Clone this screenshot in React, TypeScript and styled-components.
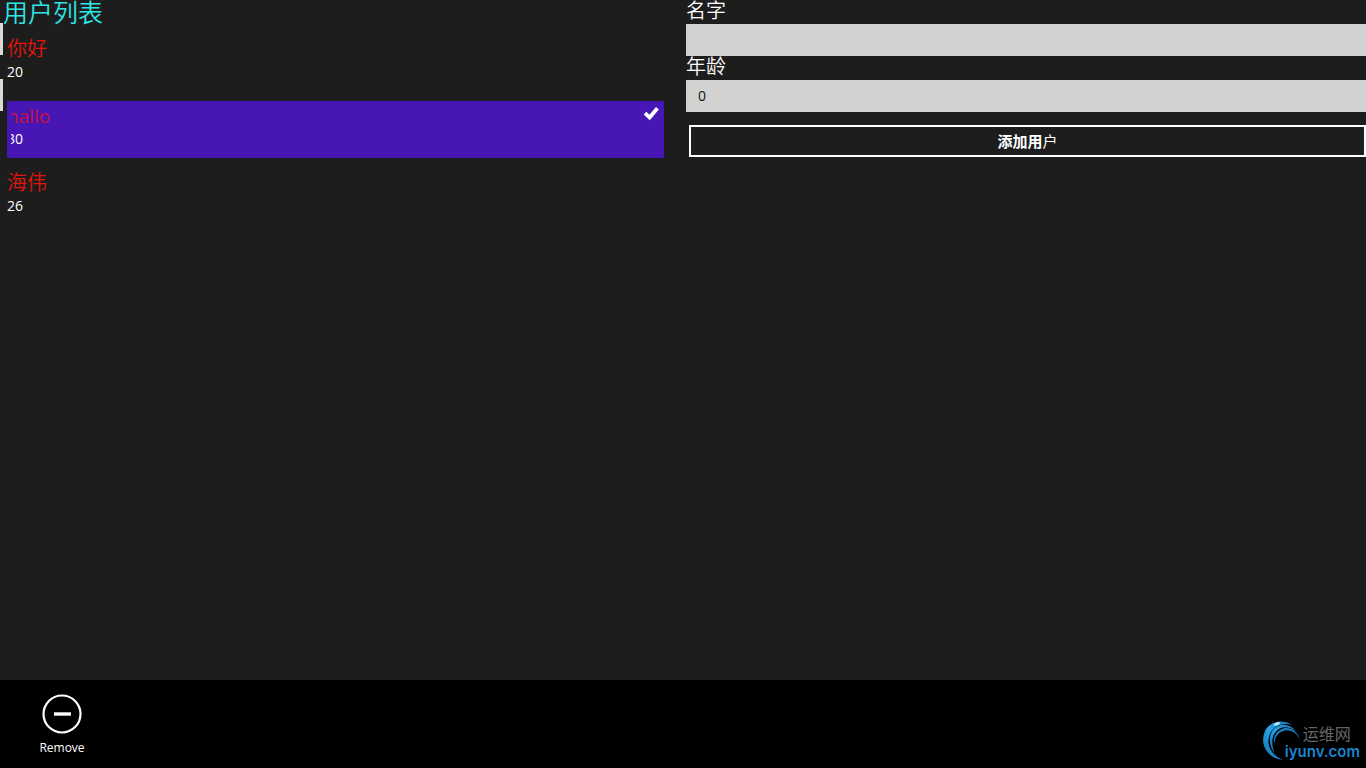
import React, { useState } from 'react';
import styled, { createGlobalStyle, css } from 'styled-components';

const GlobalStyle = createGlobalStyle`
  * { box-sizing: border-box; }
  body {
    margin: 0;
    background: #1d1d1d;
    color: #fff;
    font-family: "Open Sans", "Noto Sans CJK SC", sans-serif;
    font-size: 15px;
  }
`;

const Page = styled.div`
  display: flex;
  flex-direction: column;
  min-height: 100vh;
`;

const Columns = styled.main`
  flex: 1;
  display: grid;
  grid-template-columns: 1fr 1fr;
`;

const ListPane = styled.section`
  position: relative;
  padding: 0 19px 0 3px;
`;

const Title = styled.h1`
  margin: 0;
  color: #2ee6e6;
  font-size: 25px;
  font-weight: 350;
  line-height: 24px;
`;

const EdgeTab = styled.span<{ $top: number }>`
  position: absolute;
  left: 0;
  top: ${({ $top }) => $top}px;
  width: 3px;
  height: 32px;
  background: #d8dad5;
`;

const UserList = styled.ul`
  display: flex;
  flex-direction: column;
  gap: 10px;
  margin: 0;
  padding: 10px 0 0 4px;
  list-style: none;
`;

const UserItem = styled.button<{ $selected: boolean }>`
  display: flex;
  justify-content: space-between;
  align-items: flex-start;
  width: 100%;
  min-height: 57px;
  padding: 3px 4px 0 0;
  border: 0;
  background: ${({ $selected }) => ($selected ? '#4617b4' : 'transparent')};
  color: #fff;
  font: inherit;
  text-align: left;
`;

const UserText = styled.span<{ $clipped: boolean }>`
  display: flex;
  flex-direction: column;
  ${({ $clipped }) => $clipped && css`clip-path: inset(0 0 0 4px);`}
`;

const UserName = styled.span<{ $selected: boolean }>`
  color: ${({ $selected }) => ($selected ? '#c8103c' : '#e0150c')};
  font-size: ${({ $selected }) => ($selected ? 19 : 20)}px;
  font-weight: ${({ $selected }) => ($selected ? 400 : 350)};
  line-height: 24px;
`;

const UserAge = styled.span`
  font-size: 14px;
  line-height: 22px;
`;

const FormPane = styled.form`
  display: flex;
  flex-direction: column;
  padding-left: 3px;
`;

const Label = styled.label`
  font-size: 20px;
  font-weight: 350;
  line-height: 22px;
  height: 24px;
`;

const Field = styled.input`
  width: 100%;
  height: 32px;
  padding: 0 12px 2px;
  border: 0;
  border-radius: 0;
  background: #d2d2d2;
  color: #111;
  font: inherit;
  font-size: 14px;
`;

const AddButton = styled.button`
  height: 32px;
  margin: 13px 0 0 3px;
  padding: 0 0 2px;
  border: 2px solid #fff;
  background: transparent;
  color: #fff;
  font: inherit;
`;

const AppBar = styled.footer`
  display: flex;
  justify-content: space-between;
  align-items: flex-start;
  height: 88px;
  padding: 14px 6px 0 32px;
  background: #000;
`;

const Command = styled.button`
  display: flex;
  flex-direction: column;
  align-items: center;
  gap: 5px;
  width: 60px;
  padding: 0;
  border: 0;
  background: transparent;
  color: #fff;
  font: inherit;
  font-size: 12px;
  line-height: 18px;
`;

const Brand = styled.a`
  display: flex;
  align-items: flex-start;
  padding-top: 26px;
  text-decoration: none;
`;

const BrandText = styled.span`
  display: flex;
  flex-direction: column;
  margin-left: -15px;
  padding-top: 5px;
`;

const BrandName = styled.span`
  padding-left: 18px;
  color: #66666a;
  font-size: 16px;
  line-height: 18px;
`;

const BrandDomain = styled.span`
  color: #1a86d0;
  font-family: Inter, sans-serif;
  font-size: 15px;
  font-weight: 600;
  line-height: 18px;
`;

const users = [
  { name: '你好', age: 20 },
  { name: 'hallo', age: 30 },
  { name: '海伟', age: 26 },
];

export default function App() {
  const [selected, setSelected] = useState(1);

  return (
    <>
      <GlobalStyle />
      <Page>
        <Columns>
          <ListPane>
            <Title>用户列表</Title>
            <EdgeTab $top={23} />
            <EdgeTab $top={79} />
            <UserList>
              {users.map((user, i) => (
                <li key={user.name}>
                  <UserItem
                    type="button"
                    $selected={i === selected}
                    aria-pressed={i === selected}
                    onClick={() => setSelected(i)}
                  >
                    <UserText $clipped={i === selected}>
                      <UserName $selected={i === selected}>{user.name}</UserName>
                      <UserAge>{user.age}</UserAge>
                    </UserText>
                    {i === selected && (
                      <svg width="17" height="18" viewBox="0 0 17 18" aria-hidden="true">
                        <path d="M2 9.2 6.6 13.4 14.4 4.2" fill="none" stroke="#fff" strokeWidth="3.8" />
                      </svg>
                    )}
                  </UserItem>
                </li>
              ))}
            </UserList>
          </ListPane>
          <FormPane onSubmit={(e) => e.preventDefault()}>
            <Label htmlFor="name">名字</Label>
            <Field id="name" type="text" />
            <Label htmlFor="age">年龄</Label>
            <Field id="age" type="text" defaultValue="0" />
            <AddButton type="submit">
              <b>添加用</b>户
            </AddButton>
          </FormPane>
        </Columns>
        <AppBar>
          <Command type="button">
            <svg width="40" height="40" viewBox="0 0 40 40" aria-hidden="true">
              <circle cx="20" cy="20" r="18.5" fill="none" stroke="#fff" strokeWidth="2.2" />
              <path d="M12 20h17" stroke="#fff" strokeWidth="3.4" />
            </svg>
            Remove
          </Command>
          <Brand href="#">
            <svg width="38" height="42" viewBox="0 0 38 42" aria-hidden="true">
              <defs>
                <linearGradient id="swirl" x1="0" y1="1" x2="1" y2="0">
                  <stop offset="0" stopColor="#0f6ba8" />
                  <stop offset="0.5" stopColor="#27a4ea" />
                  <stop offset="1" stopColor="#1672ae" />
                </linearGradient>
              </defs>
              <path
                d="M30 5C21 -1 9 1 3.500 10C-3 23 4 38 21 40C9 35 4 25 7.500 15C11 6 20 2 30 5Z"
                fill="url(#swirl)"
              />
              <path
                d="M34 11C27 3 17 3 11 10C6 17 7 26 13 34C9.500 26 9 18 13.500 12C18 6 26 5.500 34 11Z"
                fill="url(#swirl)"
              />
              <path d="M38 20C35 9 25 5.500 18 10C13 13 11 18 12 24C13 18 15 14 19 12C26 8 34 11 38 20Z" fill="#1a80c4" />
              <ellipse cx="15" cy="3.800" rx="3.200" ry="1.500" fill="#bfeaff" transform="rotate(-20 15 4)" />
            </svg>
            <BrandText>
              <BrandName>运维网</BrandName>
              <BrandDomain>iyunv.com</BrandDomain>
            </BrandText>
          </Brand>
        </AppBar>
      </Page>
    </>
  );
}
